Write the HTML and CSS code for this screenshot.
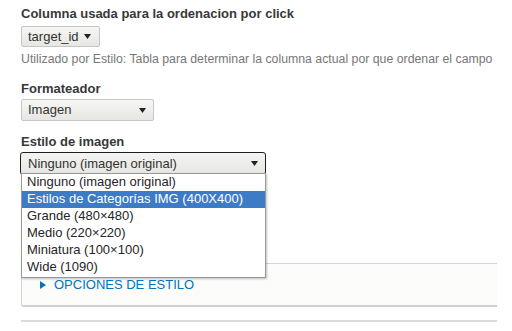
FILE: index.html
```html
<!DOCTYPE html>
<html lang="es">
<head>
<meta charset="utf-8">
<title>Formateador</title>
<link rel="stylesheet" href="styles.css">
</head>
<body>
<div class="page">
  <div class="field field-first">
    <div class="label">Columna usada para la ordenacion por click</div>
    <div class="select select-small">
      <span class="select-text">target_id</span>
      <svg class="arrow" width="7" height="5" viewBox="0 0 7 5"><path d="M0 0H7L3.5 5Z" fill="#222"/></svg>
    </div>
    <div class="help">Utilizado por Estilo: Tabla para determinar la columna actual por que ordenar el campo</div>
  </div>

  <div class="field field-formatter">
    <div class="label">Formateador</div>
    <div class="select select-medium">
      <span class="select-text">Imagen</span>
      <svg class="arrow" width="7" height="5" viewBox="0 0 7 5"><path d="M0 0H7L3.5 5Z" fill="#222"/></svg>
    </div>
  </div>

  <div class="field field-style">
    <div class="label">Estilo de imagen</div>
    <div class="select-wrap">
      <div class="select select-wide select-focus">
        <span class="select-text">Ninguno (imagen original)</span>
        <svg class="arrow" width="7" height="5" viewBox="0 0 7 5"><path d="M0 0H7L3.5 5Z" fill="#222"/></svg>
      </div>
      <ul class="dropdown">
        <li>Ninguno (imagen original)</li>
        <li class="selected">Estilos de Categorías IMG (400X400)</li>
        <li>Grande (480×480)</li>
        <li>Medio (220×220)</li>
        <li>Miniatura (100×100)</li>
        <li>Wide (1090)</li>
      </ul>
    </div>
  </div>

  <div class="details">
    <div class="summary">
      <svg class="tri" width="6" height="8" viewBox="0 0 6 8"><path d="M0 0L6 4L0 8Z" fill="#0074bd"/></svg>
      <span>OPCIONES DE ESTILO</span>
    </div>
  </div>
  <div class="next-section"></div>
</div>
</body>
</html>
```

FILE: styles.css
```css
html, body {
  margin: 0;
  padding: 0;
  background: #ffffff;
}

body {
  font-family: "Liberation Sans", Arial, sans-serif;
  font-size: 13px;
  color: #333333;
  overflow: hidden;
}

.page {
  width: 476px;
  padding: 6px 0 0 21px;
}

.label {
  font-weight: bold;
  font-size: 13px;
  line-height: 16px;
  color: #383838;
  white-space: nowrap;
  margin-bottom: 2px;
}

.field-first .label {
  margin-bottom: 4px;
}

.select {
  box-sizing: border-box;
  display: flex;
  align-items: center;
  justify-content: space-between;
  height: 21px;
  padding: 0 8px 0 6px;
  border: 1px solid #c6c6c6;
  border-radius: 2px;
  background: linear-gradient(#f6f6f4, #e6e6e3);
  color: #333333;
  font-size: 13px;
  line-height: 16px;
  white-space: nowrap;
}

.select-small {
  width: 79px;
}

.select-medium {
  width: 133px;
  height: 22px;
  padding-right: 7px;
}

.select-wide {
  width: 246px;
  height: 23px;
  margin-left: -1px;
  padding-left: 7px;
  padding-right: 7px;
}

.select-focus {
  border: 1px solid #1e1e1e;
  border-radius: 3px;
  background: linear-gradient(#f3f3f1, #e6e6e3);
}

.arrow {
  flex: none;
  display: block;
}

.help {
  margin-top: 5px;
  font-size: 12.3px;
  line-height: 14px;
  color: #777777;
  white-space: nowrap;
}

.field-formatter {
  margin-top: 15px;
}

.field-style {
  margin-top: 13px;
}

.select-wrap {
  position: relative;
}

.dropdown {
  position: absolute;
  left: 0;
  top: 21px;
  z-index: 5;
  box-sizing: border-box;
  width: 245px;
  margin: 0;
  padding: 0 0 1px 0;
  list-style: none;
  background: #ffffff;
  border: 1px solid #9a9a9a;
  box-shadow: 1px 1px 2px rgba(0, 0, 0, 0.25);
}

.dropdown li {
  height: 17px;
  line-height: 16px;
  padding-left: 5px;
  font-size: 13px;
  color: #262626;
  white-space: nowrap;
}

.dropdown li.selected {
  background: #3e7bc6;
  color: #ffffff;
}

.details {
  box-sizing: border-box;
  margin-top: 88px;
  height: 44px;
  border: 1px solid #d4d4d4;
  border-right: none;
  border-bottom: 2px solid #d0d0d0;
  border-radius: 2px 0 0 3px;
  background: #fcfcfa;
  padding: 14px 0 0 18px;
}

.summary {
  display: flex;
  align-items: center;
  gap: 8px;
  color: #0074bd;
  font-size: 13px;
  line-height: 14px;
  white-space: nowrap;
}

.tri {
  display: block;
  flex: none;
}

.next-section {
  margin-top: 13px;
  border-top: 2px solid #dcdcdc;
  height: 20px;
}
```
